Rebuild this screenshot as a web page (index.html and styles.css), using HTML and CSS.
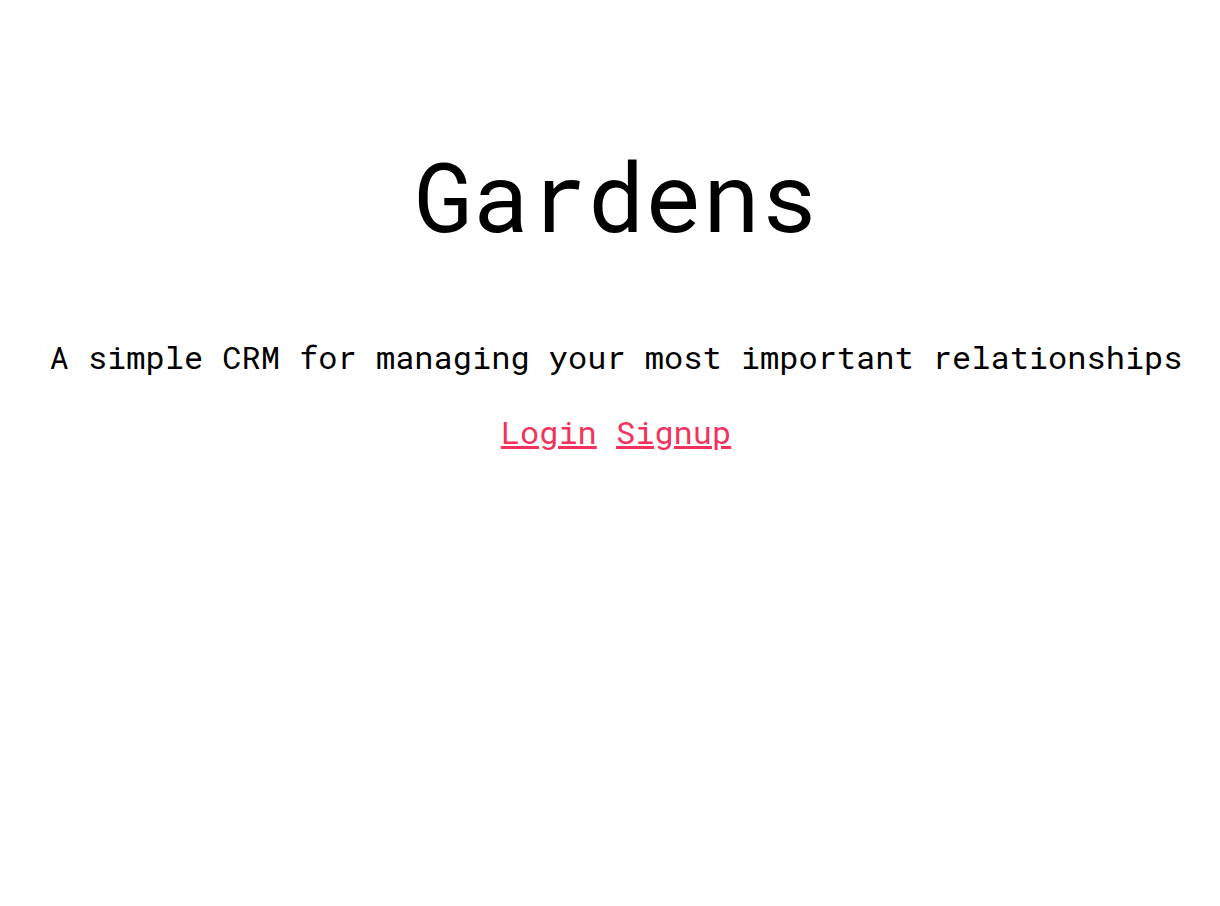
FILE: index.html
```html
<!DOCTYPE html>
<html lang="en">
<head>
<meta charset="utf-8">
<title>Gardens</title>
<link rel="stylesheet" href="styles.css">
</head>
<body>
<main class="landing">
  <h1 class="title">Gardens</h1>
  <p class="tagline">A simple CRM for managing your most important relationships</p>
  <nav class="actions">
    <a class="action-link" href="#">Login</a>
    <a class="action-link" href="#">Signup</a>
  </nav>
</main>
</body>
</html>
```
FILE: styles.css
```css
html, body {
  margin: 0;
  padding: 0;
  background: #ffffff;
}

body {
  font-family: "Roboto Mono", "DejaVu Sans Mono", "Liberation Mono", monospace;
  color: #000000;
}

.landing {
  padding: 0 0 0 12px;
  text-align: center;
}

.title {
  margin: 0;
  padding-top: 139px;
  font-size: 96px;
  font-weight: 400;
  line-height: 112px;
}

.tagline {
  margin: 86px 0 0;
  font-size: 32px;
  font-weight: 400;
  line-height: 40px;
}

.actions {
  margin-top: 35px;
  font-size: 32px;
  font-weight: 400;
  line-height: 40px;
}

.action-link {
  color: #f2325c;
  text-decoration: underline;
}
```
